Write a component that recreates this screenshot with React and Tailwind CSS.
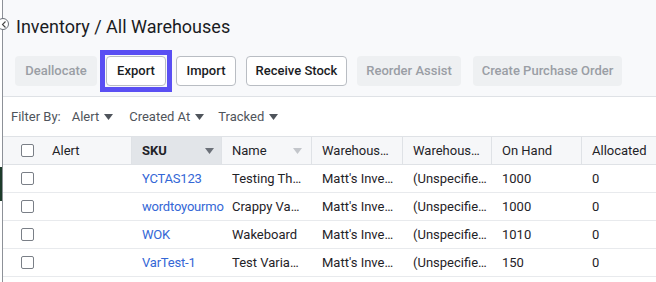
import React from 'react';

const rows = [
  { sku: 'YCTAS123', name: 'Testing Th…', wh: "Matt's Inve…", loc: '(Unspecifie…', onHand: '1000', allocated: '0' },
  { sku: 'wordtoyourmo', name: 'Crappy Va…', wh: "Matt's Inve…", loc: '(Unspecifie…', onHand: '1000', allocated: '0' },
  { sku: 'WOK', name: 'Wakeboard', wh: "Matt's Inve…", loc: '(Unspecifie…', onHand: '1010', allocated: '0' },
  { sku: 'VarTest-1', name: 'Test Varia…', wh: "Matt's Inve…", loc: '(Unspecifie…', onHand: '150', allocated: '0' },
];

function Caret({ className = '' }) {
  return (
    <svg width="9" height="6" viewBox="0 0 9 6" className={className}>
      <path d="M0 0h9L4.5 6z" fill="currentColor" />
    </svg>
  );
}

function Checkbox() {
  return <div className="w-[13px] h-[13px] rounded-[2px] border-[1.5px] border-[#7a7f87] bg-white" />;
}

const outline = 'h-[30px] shrink-0 whitespace-nowrap rounded-[4px] bg-white border border-[#b9bdc3] text-[#1a1c1f]';
const disabled = 'h-[30px] shrink-0 whitespace-nowrap rounded-[4px] bg-[#eef0f2] text-[#9a9ea5]';

export default function App() {
  return (
    <div className="relative flex w-[656px] h-[282px] overflow-hidden bg-white text-[#1f2328]" style={{ fontFamily: 'Roboto, "Liberation Sans", sans-serif' }}>
      {/* sidebar sliver */}
      <div className="w-[2px] shrink-0 bg-white">
        <div className="mt-[167px] h-[34px] bg-[#1d3b2a]" />
      </div>
      <div className="absolute left-[-3px] top-[18px] w-[12px] h-[12px] rounded-full border border-[#6b7078] bg-white flex items-center justify-end pr-[1px] z-10">
        <svg width="6" height="7" viewBox="0 0 6 7"><path d="M4.5 0.5L1.5 3.5L4.5 6.5" fill="none" stroke="#444" strokeWidth="1.1" /></svg>
      </div>

      <div className="flex-1 min-w-0 flex flex-col border-l border-[#8d9198]">
        {/* header */}
        <div className="bg-[#f8f9fb] border-b border-[#dfe2e6] h-[97px] shrink-0 flex flex-col">
          <h1 className="pl-[13px] pt-[14px] text-[18px] leading-[26px] font-normal text-[#1a1c1f] whitespace-nowrap">Inventory / All Warehouses</h1>
          <div className="flex items-center pl-[12px] mt-[10px] text-[13px] font-medium">
            <button className={`${disabled} w-[82px]`}>Deallocate</button>
            <div className="ml-[3px] shrink-0 p-[1px] border-[5px] border-[#5a4ff3]">
              <button className={`${outline} w-[60px] block`}>Export</button>
            </div>
            <button className={`${outline} w-[60px] ml-[4px]`}>Import</button>
            <button className={`${outline} w-[101px] ml-[10px]`}>Receive Stock</button>
            <button className={`${disabled} w-[104px] ml-[10px]`}>Reorder Assist</button>
            <button className={`${disabled} w-[149px] ml-[12px]`}>Create Purchase Order</button>
          </div>
        </div>

        {/* filter bar */}
        <div className="h-[40px] shrink-0 flex items-center pl-[8px] text-[13px] text-[#4f545b] border-b border-[#dfe2e6]">
          <span>Filter By:</span>
          <span className="ml-[11px] flex items-center gap-[5px]">Alert <Caret /></span>
          <span className="ml-[16px] flex items-center gap-[5px]">Created At <Caret /></span>
          <span className="ml-[14px] flex items-center gap-[5px]">Tracked <Caret /></span>
        </div>

        {/* table */}
        <div className="text-[13px]">
          <div className="h-[28px] flex items-center bg-[#f6f7f9] border-b border-[#dfe2e6]">
            <div className="w-[129px] shrink-0 flex items-center h-full border-r border-[#dfe2e6]">
              <div className="ml-[18px]"><Checkbox /></div>
              <span className="ml-[18px]">Alert</span>
            </div>
            <div className="w-[90px] shrink-0 h-full flex items-center justify-between pl-[10px] pr-[7px] bg-[#e2e5e9] border-r border-[#dfe2e6] font-bold">
              <span>SKU</span>
              <Caret className="text-[#6b7078]" />
            </div>
            <div className="w-[90px] shrink-0 h-full flex items-center justify-between pl-[10px] pr-[9px] border-r border-[#dfe2e6]">
              <span>Name</span>
              <Caret className="text-[#c3c6cb]" />
            </div>
            <div className="w-[91px] shrink-0 h-full flex items-center px-[10px] border-r border-[#dfe2e6] whitespace-nowrap">Warehous…</div>
            <div className="w-[89px] shrink-0 h-full flex items-center px-[10px] border-r border-[#dfe2e6] whitespace-nowrap">Warehous…</div>
            <div className="w-[90px] shrink-0 h-full flex items-center px-[10px] border-r border-[#dfe2e6]">On Hand</div>
            <div className="flex-1 h-full flex items-center px-[10px]">Allocated</div>
          </div>
          {rows.map((r) => (
            <div key={r.sku} className="h-[28px] flex items-center border-b border-[#e8eaed]">
              <div className="w-[129px] shrink-0 flex items-center">
                <div className="ml-[18px]"><Checkbox /></div>
              </div>
              <div className="w-[90px] shrink-0 pl-[10px] text-[#3467d6] whitespace-nowrap tracking-[-0.2px]">{r.sku}</div>
              <div className="w-[90px] shrink-0 px-[10px] whitespace-nowrap">{r.name}</div>
              <div className="w-[91px] shrink-0 px-[10px] whitespace-nowrap">{r.wh}</div>
              <div className="w-[89px] shrink-0 px-[10px] whitespace-nowrap">{r.loc}</div>
              <div className="w-[90px] shrink-0 px-[10px]">{r.onHand}</div>
              <div className="flex-1 px-[10px]">{r.allocated}</div>
            </div>
          ))}
        </div>
      </div>
    </div>
  );
}
